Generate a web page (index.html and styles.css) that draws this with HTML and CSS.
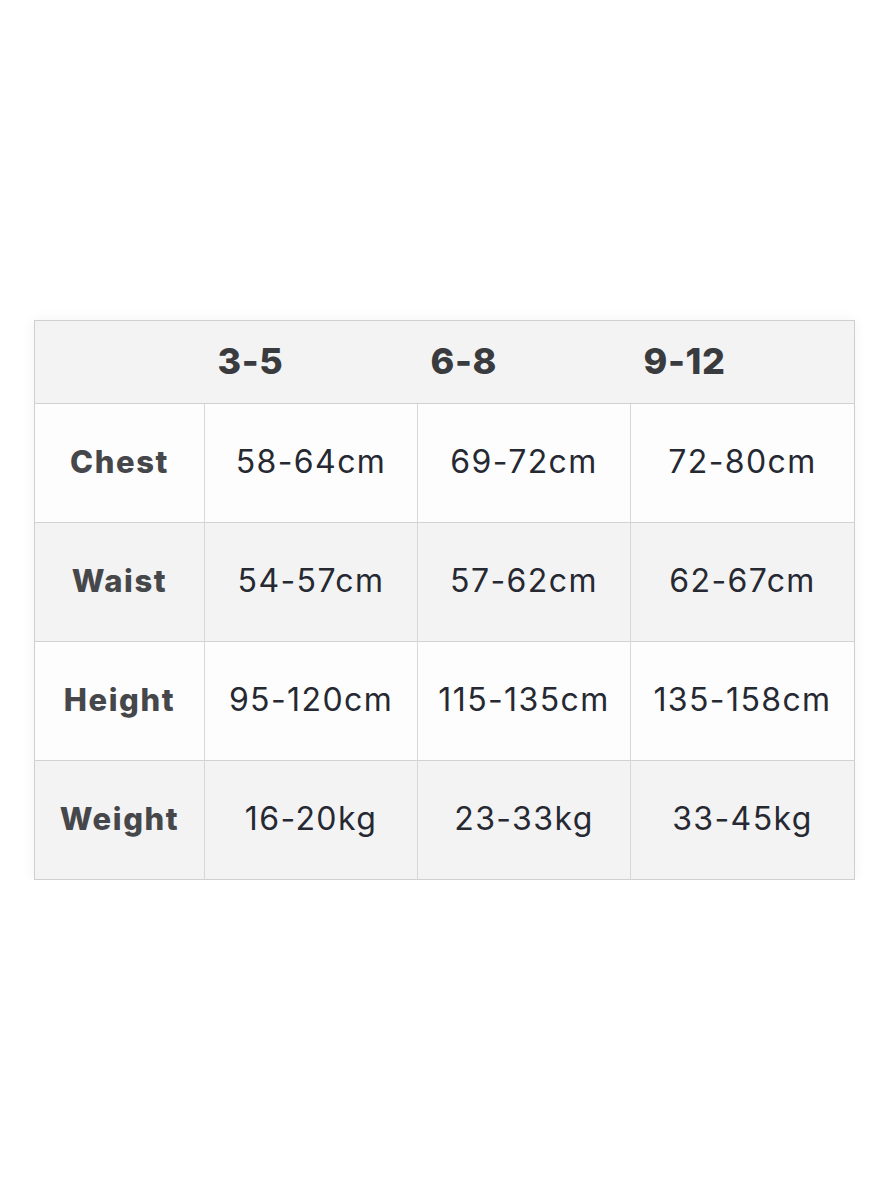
FILE: index.html
```html
<!DOCTYPE html>
<html>
<head>
<meta charset="utf-8">
<link rel="stylesheet" href="styles.css">
</head>
<body>
<div class="page">
  <table class="chart">
    <colgroup>
      <col class="c-label">
      <col class="c-mid">
      <col class="c-mid">
      <col class="c-last">
    </colgroup>
    <thead>
      <tr class="head-row">
        <th class="corner"></th>
        <th class="age">3-5</th>
        <th class="age">6-8</th>
        <th class="age">9-12</th>
      </tr>
    </thead>
    <tbody>
      <tr class="row light">
        <th class="label">Chest</th>
        <td class="val">58-64cm</td>
        <td class="val">69-72cm</td>
        <td class="val">72-80cm</td>
      </tr>
      <tr class="row shade">
        <th class="label">Waist</th>
        <td class="val">54-57cm</td>
        <td class="val">57-62cm</td>
        <td class="val">62-67cm</td>
      </tr>
      <tr class="row light">
        <th class="label">Height</th>
        <td class="val">95-120cm</td>
        <td class="val">115-135cm</td>
        <td class="val">135-158cm</td>
      </tr>
      <tr class="row shade">
        <th class="label">Weight</th>
        <td class="val">16-20kg</td>
        <td class="val">23-33kg</td>
        <td class="val">33-45kg</td>
      </tr>
    </tbody>
  </table>
</div>
</body>
</html>
```

FILE: styles.css
```css
html, body {
  margin: 0;
  padding: 0;
  background: #ffffff;
}

.page {
  padding: 320px 34px 0 34px;
}

.chart {
  width: 821px;
  border-collapse: collapse;
  table-layout: fixed;
  font-family: "Inter", "Open Sans", sans-serif;
  box-shadow: 0 0 14px rgba(0, 0, 0, 0.05);
  border: 1px solid #cfcfcf;
}

.chart th,
.chart td {
  box-sizing: border-box;
}

.c-label { width: 170px; }
.c-mid { width: 213px; }
.c-last { width: 224px; }

.head-row {
  background: #f3f3f3;
  height: 83px;
}

.age {
  text-align: left;
  padding: 0 0 2px 13px;
  font-size: 36px;
  font-weight: 800;
  color: #3a3b3e;
  letter-spacing: 0.6px;
}

.row {
  height: 119px;
}

.row.light { background: #fdfdfd; }
.row.shade { background: #f3f3f3; }

.row th,
.row td {
  border-top: 1px solid #d2d2d2;
  border-left: 1px solid #d7d7d7;
  text-align: center;
  vertical-align: middle;
  padding: 0 0 4px 0;
}

.row th:first-child { border-left: none; }

.label {
  font-size: 31px;
  font-weight: 800;
  color: #46474a;
  letter-spacing: 1.6px;
}

.val {
  font-size: 32px;
  font-weight: 400;
  color: #262932;
  letter-spacing: 1.4px;
}
```
